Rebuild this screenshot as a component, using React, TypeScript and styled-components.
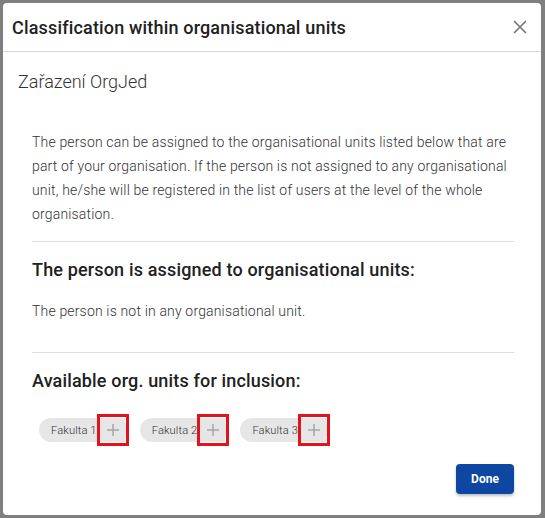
import React from "react";
import styled, { createGlobalStyle } from "styled-components";

const Global = createGlobalStyle`
  html, body { margin: 0; padding: 0; }
  body {
    background: #7f7f7f;
    font-family: Roboto, "Liberation Sans", Arial, sans-serif;
    width: 545px;
    height: 518px;
    overflow: hidden;
  }
`;

const Backdrop = styled.div`
  width: 545px;
  height: 518px;
  padding: 3px 4px 3px 3px;
  box-sizing: border-box;
  display: flex;
`;

const Dialog = styled.div`
  flex: 1;
  background: #fff;
  border-radius: 4px;
  display: flex;
  flex-direction: column;
  overflow: hidden;
`;

const Header = styled.header`
  height: 49px;
  flex: none;
  box-sizing: border-box;
  border-bottom: 1px solid #d6d6d6;
  display: flex;
  align-items: center;
  justify-content: space-between;
  padding: 0 12px 0 9px;
`;

const Title = styled.h1`
  margin: 0;
  font-size: 18px;
  font-weight: 500;
  color: #212121;
  letter-spacing: 0.17px;
`;

const CloseButton = styled.button`
  border: none;
  background: none;
  padding: 0;
  width: 18px;
  height: 18px;
  display: flex;
  align-items: center;
  justify-content: center;
  cursor: pointer;
`;

const Body = styled.div`
  flex: 1;
  display: flex;
  flex-direction: column;
  padding: 18px 27px 20px 0;
`;

const Subtitle = styled.h2`
  margin: 0 0 0 15px;
  font-size: 18px;
  line-height: 24px;
  font-weight: 300;
  color: #333;
`;

const Content = styled.div`
  margin: 36px 0 0 29px;
  display: flex;
  flex-direction: column;
`;

const Paragraph = styled.p<{ $top?: number }>`
  margin: ${(p) => p.$top ?? 0}px 0 0;
  font-size: 14px;
  line-height: 24px;
  font-weight: 300;
  letter-spacing: 0.17px;
  color: #333;
`;

const Divider = styled.hr<{ $top: number; $bottom: number }>`
  border: none;
  border-top: 1px solid #dedede;
  margin: ${(p) => `${p.$top}px 0 ${p.$bottom}px`};
  height: 0;
`;

const SectionTitle = styled.h3`
  margin: 0;
  font-size: 18px;
  line-height: 24px;
  font-weight: 500;
  letter-spacing: 0.16px;
  color: #212121;
`;

const ChipRow = styled.div`
  display: flex;
  gap: 13px;
  margin: 25px 0 0 7px;
`;

const Chip = styled.div`
  display: inline-flex;
  align-items: center;
  height: 24px;
  border-radius: 12px;
  background: #e6e6e6;
  padding: 0 2px 0 12px;
  font-size: 11.2px;
  font-weight: 300;
  letter-spacing: 0.1px;
  color: #333;
`;

const AddButton = styled.button`
  width: 24px;
  height: 24px;
  margin-left: 4px;
  border: none;
  padding: 0;
  background: #e6e6e6;
  outline: 3px solid #e3131b;
  outline-offset: 1px;
  display: flex;
  align-items: center;
  justify-content: center;
`;

const Footer = styled.div`
  display: flex;
  justify-content: flex-end;
  margin-top: 22px;
`;

const DoneButton = styled.button`
  width: 58px;
  height: 30px;
  border: none;
  border-radius: 4px;
  background: #0d47a1;
  color: #fff;
  font-family: Roboto, "Liberation Sans", Arial, sans-serif;
  font-weight: 700;
  font-size: 12px;
  box-shadow: 0 2px 3px rgba(0, 0, 0, 0.25);
`;

const CloseIcon = () => (
  <svg width="14" height="14" viewBox="0 0 14 14">
    <path d="M1 1L13 13M13 1L1 13" stroke="#757575" strokeWidth="1.6" fill="none" />
  </svg>
);

const PlusIcon = () => (
  <svg width="14" height="14" viewBox="0 0 14 14">
    <path d="M7 1V13M1 7H13" stroke="#a6a6a6" strokeWidth="1.5" fill="none" />
  </svg>
);

const units = ["Fakulta 1", "Fakulta 2", "Fakulta 3"];

export default function App() {
  return (
    <>
      <Global />
      <Backdrop>
        <Dialog>
          <Header>
            <Title>Classification within organisational units</Title>
            <CloseButton aria-label="close">
              <CloseIcon />
            </CloseButton>
          </Header>
          <Body>
            <Subtitle>Zařazení OrgJed</Subtitle>
            <Content>
              <Paragraph>
                The person can be assigned to the organisational units listed below that are
                part of your organisation. If the person is not assigned to any organisational
                unit, he/she will be registered in the list of users at the level of the whole
                organisation.
              </Paragraph>
              <Divider $top={15} $bottom={16} />
              <SectionTitle>The person is assigned to organisational units:</SectionTitle>
              <Paragraph $top={17}>The person is not in any organisational unit.</Paragraph>
              <Divider $top={29} $bottom={16} />
              <SectionTitle>Available org. units for inclusion:</SectionTitle>
              <ChipRow>
                {units.map((u) => (
                  <Chip key={u}>
                    {u}
                    <AddButton aria-label={`add ${u}`}>
                      <PlusIcon />
                    </AddButton>
                  </Chip>
                ))}
              </ChipRow>
              <Footer>
                <DoneButton>Done</DoneButton>
              </Footer>
            </Content>
          </Body>
        </Dialog>
      </Backdrop>
    </>
  );
}
